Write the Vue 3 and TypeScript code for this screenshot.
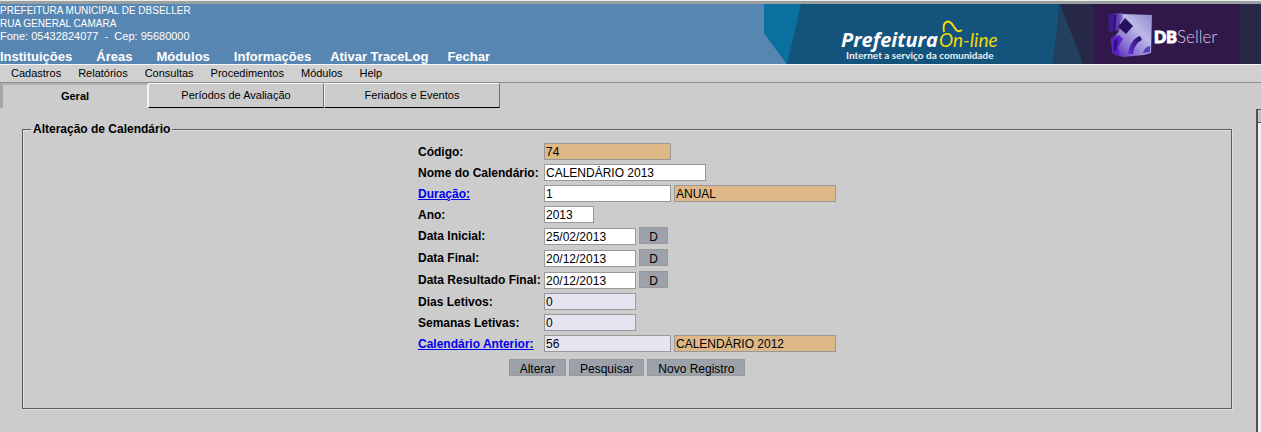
<script setup lang="ts">
import { reactive } from 'vue'

interface Row {
  id: string
  label: string
  value: string
  size: 'small' | 'date' | 'code' | 'name'
  tone: 'plain' | 'locked' | 'soft'
  link?: boolean
  picker?: boolean
  detail?: string
}

interface MenuItem {
  text: string
  tool?: boolean
}

const systemMenu: MenuItem[] = [
  { text: 'Instituições' },
  { text: 'Áreas' },
  { text: 'Módulos' },
  { text: 'Informações' },
  { text: 'Ativar TraceLog', tool: true },
  { text: 'Fechar', tool: true },
]
const moduleMenu: string[] = ['Cadastros', 'Relatórios', 'Consultas', 'Procedimentos', 'Módulos', 'Help']
const tabs: string[] = ['Geral', 'Períodos de Avaliação', 'Feriados e Eventos']
const actions: string[] = ['Alterar', 'Pesquisar', 'Novo Registro']

const rows = reactive<Row[]>([
  { id: 'codigo', label: 'Código:', value: '74', size: 'code', tone: 'locked' },
  { id: 'nome', label: 'Nome do Calendário:', value: 'CALENDÁRIO 2013', size: 'name', tone: 'plain' },
  { id: 'duracao', label: 'Duração:', value: '1', size: 'code', tone: 'plain', link: true, detail: 'ANUAL' },
  { id: 'ano', label: 'Ano:', value: '2013', size: 'small', tone: 'plain' },
  { id: 'inicial', label: 'Data Inicial:', value: '25/02/2013', size: 'date', tone: 'plain', picker: true },
  { id: 'final', label: 'Data Final:', value: '20/12/2013', size: 'date', tone: 'plain', picker: true },
  { id: 'resultado', label: 'Data Resultado Final:', value: '20/12/2013', size: 'date', tone: 'plain', picker: true },
  { id: 'dias', label: 'Dias Letivos:', value: '0', size: 'date', tone: 'soft' },
  { id: 'semanas', label: 'Semanas Letivas:', value: '0', size: 'date', tone: 'soft' },
  { id: 'anterior', label: 'Calendário Anterior:', value: '56', size: 'code', tone: 'soft', link: true, detail: 'CALENDÁRIO 2012' },
])
</script>

<template>
  <div class="page">
    <header class="banner">
      <div class="banner-left">
        <address class="office">
          <span>PREFEITURA MUNICIPAL DE DBSELLER</span>
          <span>RUA GENERAL CAMARA</span>
          <span class="phone">Fone: 05432824077 &nbsp;-&nbsp; Cep: 95680000</span>
        </address>
        <nav class="system-menu">
          <a v-for="item in systemMenu" :key="item.text" href="#" :class="{ tool: item.tool }">{{ item.text }}</a>
        </nav>
      </div>
      <svg class="brand" width="497" height="60" viewBox="0 0 497 60" role="img" aria-label="Prefeitura On-line, DBSeller">
        <defs>
          <linearGradient id="cube" x1="0" y1="1" x2="1" y2="0">
            <stop offset="0" stop-color="#4a12b4" />
            <stop offset="0.35" stop-color="#8f7bd4" />
            <stop offset="0.65" stop-color="#bcb9e8" />
            <stop offset="1" stop-color="#8d86cc" />
          </linearGradient>
          <linearGradient id="cubeSide" x1="0" y1="0" x2="1" y2="0">
            <stop offset="0" stop-color="#3b1a86" />
            <stop offset="0.4" stop-color="#4a1c9c" />
            <stop offset="1" stop-color="#8470cc" />
          </linearGradient>
          <linearGradient id="arch" x1="0" y1="1" x2="1" y2="0">
            <stop offset="0" stop-color="#6a2fd6" />
            <stop offset="1" stop-color="#1e1258" />
          </linearGradient>
        </defs>
        <path d="M0 0H497V60H23L0 29Z" fill="#14547c" />
        <path d="M0 0H37L23 60L0 29Z" fill="#0a709f" />
        <path d="M296 0H497V60H289Z" fill="#272848" />
        <path d="M296 0L319 60H289Z" fill="#22415f" />
        <rect x="330" y="0" width="146" height="60" fill="#30184a" />
        <path d="M358 10L388 11L387 49L380 51L359 53L349 50L347 35L352 31L355 27L356 18Z" fill="url(#cube)" />
        <path d="M344 10L358 9L359 15L355 20L356 26L345 28Z" fill="url(#cubeSide)" />
        <path d="M350 11L352 11L351 27L349 27Z" fill="#28116a" />
        <path d="M361 14L369 22L362 30L354 23Z" fill="#25105e" />
        <path d="M347 34L355 31L359 35L354 43L356 52L348 49Z" fill="#5a20c8" />
        <path d="M350 37L354 34L352 46L350 48Z" fill="#2e1080" />
        <path d="M364 50C365 42 369 34 376 32L378 36C372 39 370 44 369 50Z" fill="url(#arch)" />
        <path d="M379 49C380 45 383 42 386 42V48Z" fill="#5a3fbd" />
        <text x="77" y="43" class="logo-main" fill="#ffffff">Prefeitura</text>
        <text x="175" y="43" class="logo-line" fill="#f2d90a">On-line</text>
        <path d="M180 28C178 17 185 14 190 23C193 28 195 28 198 26" fill="none" stroke="#f2d90a" stroke-width="2" />
        <text x="82" y="55" class="logo-tag" fill="#e8f0f5">Internet a serviço da comunidade</text>
        <text x="390" y="39" class="logo-db" fill="#ffffff" stroke="#ffffff">DB</text>
        <text x="413" y="39" class="logo-seller" fill="#d6cde0">Seller</text>
      </svg>
    </header>

    <nav class="module-menu">
      <a v-for="item in moduleMenu" :key="item" href="#">{{ item }}</a>
    </nav>

    <div class="body">
      <main class="content">
        <div class="tabs">
          <button v-for="(tab, i) in tabs" :key="tab" type="button" :class="['tab', { active: i === 0 }]">{{ tab }}</button>
        </div>
        <form class="form" @submit.prevent>
          <fieldset class="box">
            <legend>Alteração de Calendário</legend>
            <div class="grid">
              <template v-for="row in rows" :key="row.id">
                <label class="caption" :for="row.id">
                  <a v-if="row.link" href="#">{{ row.label }}</a>
                  <template v-else>{{ row.label }}</template>
                </label>
                <div :class="['fields', { dated: row.picker }]">
                  <input :id="row.id" v-model="row.value" type="text" :class="['field', row.size, row.tone]" :readonly="row.tone !== 'plain'" />
                  <button v-if="row.picker" type="button" class="btn pick" :aria-label="'D ' + row.label">D</button>
                  <input v-if="row.detail" v-model="row.detail" type="text" class="field name locked" :aria-label="row.label" readonly />
                </div>
              </template>
            </div>
            <div class="actions">
              <button v-for="action in actions" :key="action" type="button" class="btn">{{ action }}</button>
            </div>
          </fieldset>
        </form>
      </main>
      <aside class="edge"><span class="edge-cap"></span></aside>
    </div>
  </div>
</template>

<style>
body {
  background: #cccccc;
}
</style>

<style scoped>
.page {
  min-height: 100vh;
  display: flex;
  flex-direction: column;
  box-sizing: border-box;
  overflow: hidden;
  border-top: 1px solid #ecece4;
  background: #cccccc;
  color: #000000;
  font-family: "Liberation Sans", Arial, sans-serif;
  font-size: 11px;
}
.banner {
  display: flex;
  justify-content: space-between;
  border-top: 3px solid #9ba0a3;
  background: #5786b2;
  color: #ffffff;
}
.banner-left {
  display: flex;
  flex-direction: column;
  justify-content: space-between;
}
.office {
  display: flex;
  flex-direction: column;
  font-style: normal;
  font-size: 10px;
  line-height: 13px;
}
.phone {
  font-size: 11px;
}
.system-menu {
  display: flex;
  font-size: 13px;
  font-weight: bold;
  line-height: 15px;
  white-space: nowrap;
}
.system-menu a + a {
  margin-left: 24px;
}
.system-menu a + a.tool {
  margin-left: 19px;
}
.system-menu a,
.module-menu a {
  color: inherit;
  text-decoration: none;
}
.brand {
  display: block;
  flex: none;
}
.logo-main {
  font: italic bold 20px "Open Sans", sans-serif;
}
.logo-line {
  font: italic 19px Lato, sans-serif;
}
.logo-tag {
  font: bold 10px Lato, sans-serif;
}
.logo-db {
  font: 900 16px Lato, sans-serif;
}
.logo-seller {
  font: 300 17px Lato, sans-serif;
}
.module-menu {
  display: flex;
  gap: 17px;
  padding: 0 11px;
  border-top: 1px solid #f4f4f4;
  border-bottom: 1px solid #8e8e8e;
  background: #d0d0d0;
  line-height: 17px;
}
.body {
  flex: 1;
  display: flex;
}
.content {
  flex: 1;
  min-width: 0;
}
.tabs {
  display: flex;
}
.tab {
  box-sizing: border-box;
  width: 176px;
  height: 25px;
  padding: 0 0 2px;
  border: 1px solid #f4f4f4;
  border-right-color: #707070;
  border-bottom-color: #000000;
  background: #cccccc;
  color: #000000;
  font: 11px "Liberation Sans", Arial, sans-serif;
}
.tab.active {
  width: 148px;
  border: 0;
  border-top: 2px solid #b2b2b2;
  border-left: 3px solid #a6a6a6;
  border-right: 1px solid #f4f4f4;
  font-weight: bold;
}
.form {
  padding: 14px 24px 22px 22px;
}
.box {
  min-width: 0;
  margin: 0;
  padding: 7px 8px 32px;
  border: 1px solid #5c5c63;
  box-shadow: 1px 1px 0 #e0dfe4, inset 1px 1px 0 #e0dfe4;
}
.box legend {
  padding: 0 2px;
  background: #cccccc;
  font-size: 12px;
  font-weight: bold;
  line-height: 14px;
}
.grid {
  display: grid;
  grid-template-columns: 122px max-content;
  column-gap: 4px;
  row-gap: 4px;
  justify-content: center;
}
.caption {
  height: 17px;
  font-size: 12px;
  font-weight: bold;
  line-height: 18px;
  white-space: nowrap;
}
.caption a {
  color: #0000ee;
}
.fields {
  display: flex;
  gap: 3px;
  height: 17px;
}
.fields.dated {
  height: 18px;
}
.dated .field {
  align-self: flex-end;
}
.field {
  box-sizing: border-box;
  height: 17px;
  padding: 0 1px;
  border: 1px solid #999999;
  background: #ffffff;
  color: #000000;
  font: 12px "Liberation Sans", Arial, sans-serif;
}
.small {
  width: 50px;
}
.date {
  width: 92px;
}
.code {
  width: 127px;
}
.name {
  width: 162px;
}
.locked {
  background: #deb887;
}
.soft {
  background: #e6e4f1;
}
.btn {
  box-sizing: border-box;
  height: 17px;
  padding: 2px 10px 0;
  border: 1px solid #999999;
  background: #9da2aa;
  color: #000000;
  font: 12px/15px "Liberation Sans", Arial, sans-serif;
}
.btn.pick {
  width: 29px;
  padding: 2px 0 0;
}
.actions {
  display: flex;
  justify-content: center;
  gap: 3px;
  margin-top: 7px;
}
.edge {
  width: 3px;
  margin-top: 26px;
  border-top: 1px solid #50505a;
  border-left: 2px solid #50505a;
  background: #f2f0f2;
}
.edge-cap {
  display: block;
  height: 12px;
  border-bottom: 1px solid #50505a;
  background: #c4c4ca;
}
</style>
